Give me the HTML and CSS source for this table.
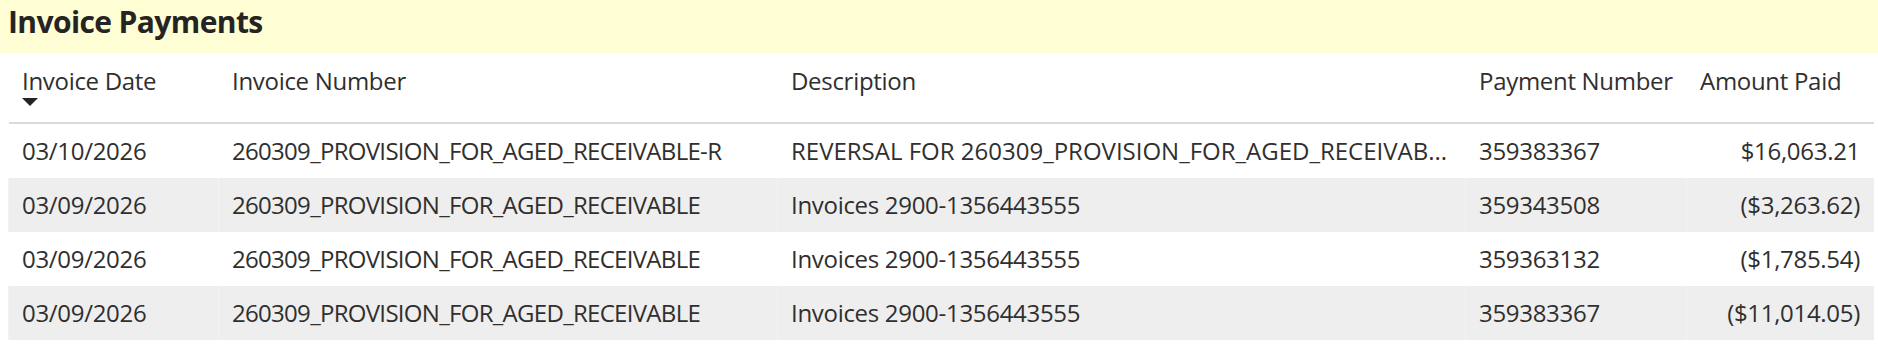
FILE: index.html
```html
<!DOCTYPE html>
<html lang="en">
<head>
<meta charset="utf-8">
<title>Invoice Payments</title>
<link rel="stylesheet" href="styles.css">
</head>
<body>
<div class="visual">
  <div class="title">Invoice Payments</div>
  <div class="table">
    <div class="row head">
      <div class="cell"><span>Invoice Date</span><span class="sort"></span></div>
      <div class="cell"><span>Invoice Number</span></div>
      <div class="cell"><span>Description</span></div>
      <div class="cell"><span>Payment Number</span></div>
      <div class="cell"><span>Amount Paid</span></div>
    </div>
    <div class="row">
      <div class="cell">03/10/2026</div>
      <div class="cell caps">260309_PROVISION_FOR_AGED_RECEIVABLE-R</div>
      <div class="cell wide">REVERSAL FOR 260309_PROVISION_FOR_AGED_RECEIVAB...</div>
      <div class="cell">359383367</div>
      <div class="cell num">$16,063.21</div>
    </div>
    <div class="row alt">
      <div class="cell">03/09/2026</div>
      <div class="cell caps">260309_PROVISION_FOR_AGED_RECEIVABLE</div>
      <div class="cell">Invoices 2900-1356443555</div>
      <div class="cell">359343508</div>
      <div class="cell num">($3,263.62)</div>
    </div>
    <div class="row">
      <div class="cell">03/09/2026</div>
      <div class="cell caps">260309_PROVISION_FOR_AGED_RECEIVABLE</div>
      <div class="cell">Invoices 2900-1356443555</div>
      <div class="cell">359363132</div>
      <div class="cell num">($1,785.54)</div>
    </div>
    <div class="row alt">
      <div class="cell">03/09/2026</div>
      <div class="cell caps">260309_PROVISION_FOR_AGED_RECEIVABLE</div>
      <div class="cell">Invoices 2900-1356443555</div>
      <div class="cell">359383367</div>
      <div class="cell num">($11,014.05)</div>
    </div>
  </div>
</div>
</body>
</html>
```

FILE: styles.css
```css
html, body {
  margin: 0;
  padding: 0;
  background: #ffffff;
}

body {
  font-family: "Open Sans", "Noto Sans", sans-serif;
  color: #302f2e;
  width: 1878px;
  height: 346px;
  overflow: hidden;
}

.title {
  background: #fefdd4;
  height: 53px;
  box-sizing: border-box;
  padding-left: 8px;
  font-size: 30px;
  font-weight: 700;
  letter-spacing: -0.6px;
  line-height: 44px;
  color: #252423;
}

.table {
  margin-left: 9px;
  width: 1865px;
  font-size: 24px;
  letter-spacing: -0.3px;
}

.row {
  display: grid;
  grid-template-columns: 210px 559px 688px 221px 187px;
  height: 54px;
}

.row.head {
  height: 69px;
  border-bottom: 2px solid #dadada;
}

.row.alt {
  background: #eeeeee;
}

.cell {
  padding: 0 12px 0 13px;
  line-height: 54px;
  white-space: nowrap;
  overflow: hidden;
  border-left: 1px solid transparent;
  margin-left: -1px;
}

.cell.caps {
  letter-spacing: -0.7px;
}

.cell.wide {
  letter-spacing: 0;
}

.row.alt .cell {
  border-left-color: #f3f3f3;
}

.row.head .cell {
  line-height: 32px;
  padding-top: 12px;
  display: flex;
  flex-direction: column;
  align-items: flex-start;
}

.cell.num {
  text-align: right;
  padding-right: 14px;
}

.sort {
  width: 0;
  height: 0;
  margin-top: 1px;
  border-left: 8px solid transparent;
  border-right: 8px solid transparent;
  border-top: 8px solid #252423;
}
```
